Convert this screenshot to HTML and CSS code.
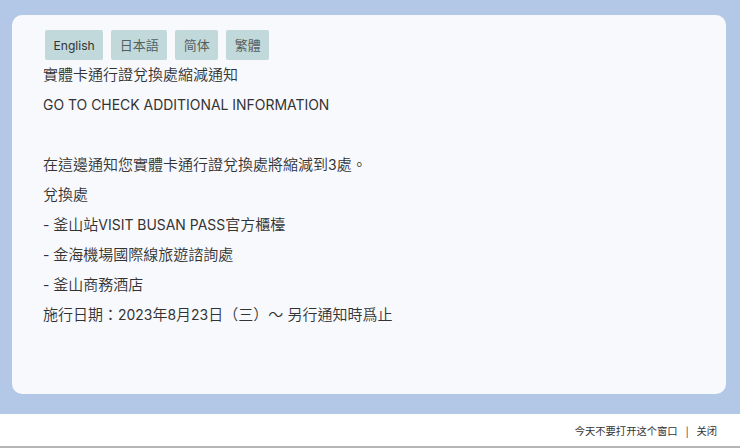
FILE: index.html
```html
<!DOCTYPE html>
<html lang="zh-Hant">
<head>
<meta charset="utf-8">
<title>實體卡通行證兌換處縮減通知</title>
<link rel="stylesheet" href="styles.css">
</head>
<body>
<div class="stage">
  <div class="card">
    <div class="langs">
      <span class="lang"><span class="en">English</span></span>
      <span class="lang">日本語</span>
      <span class="lang">简体</span>
      <span class="lang">繁體</span>
    </div>
    <p class="line">實體卡通行證兌換處縮減通知</p>
    <p class="line"><span class="en">GO TO CHECK ADDITIONAL INFORMATION</span></p>
    <p class="line blank">&nbsp;</p>
    <p class="line">在這邊通知您實體卡通行證兌換處將縮減到<span class="en">3</span>處。</p>
    <p class="line">兌換處</p>
    <p class="line"><span class="en">- </span>釜山站<span class="en">VISIT BUSAN PASS</span>官方櫃檯</p>
    <p class="line"><span class="en">- </span>金海機場國際線旅遊諮詢處</p>
    <p class="line"><span class="en">- </span>釜山商務酒店</p>
    <p class="line">施行日期：<span class="en">2023</span>年<span class="en">8</span>月<span class="en">23</span>日（三）～ 另行通知時爲止</p>
  </div>
</div>
<div class="footer">
  <span class="ft">今天不要打开这个窗口</span>
  <span class="sep">|</span>
  <span class="ft">关闭</span>
</div>
</body>
</html>
```

FILE: styles.css
```css
html, body {
  margin: 0;
  padding: 0;
}
body {
  width: 740px;
  height: 448px;
  overflow: hidden;
  background: #ffffff;
  font-family: Inter, "Noto Sans CJK TC", sans-serif;
  color: #333333;
}
.stage {
  background: #b3c8e6;
  padding: 15px 14px 20px 12px;
  height: 379px;
}
.card {
  background: #f8f9fd;
  border-radius: 10px;
  height: 379px;
  box-sizing: border-box;
  padding: 15px 32px 0 31px;
}
.langs {
  display: flex;
  gap: 8px;
  margin-left: 2px;
}
.lang {
  display: block;
  background: #c1d9da;
  color: #555e60;
  font-size: 13px;
  line-height: 30px;
  height: 30px;
  padding: 0 8.5px;
  border-radius: 2px;
}
.line {
  margin: 0;
  font-size: 15px;
  font-weight: 350;
  line-height: 30px;
  height: 30px;
  white-space: nowrap;
}
.en {
  font-size: 0.93em;
  font-weight: 400;
  color: #333333;
}
.footer {
  height: 32px;
  border-bottom: 2px solid #b5b5b5;
  display: flex;
  justify-content: flex-end;
  align-items: center;
  padding-right: 23px;
  font-family: "Noto Sans CJK SC", sans-serif;
  font-size: 10.3px;
  color: #333333;
}
.sep {
  margin: 0 8px;
}
```
